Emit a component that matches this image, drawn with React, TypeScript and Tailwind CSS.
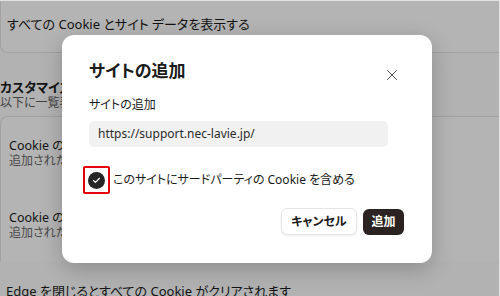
import { X, Check } from "lucide-react";

function SettingsRow({ title, desc }: { title: string; desc: string }) {
  return (
    <div className="h-[72px] flex flex-col justify-center px-[8px]">
      <p className="text-[12.5px] leading-[15px] text-[#1b1b1b]">{title}</p>
      <p className="text-[12px] leading-[15px] text-[#6a6a6a]">{desc}</p>
    </div>
  );
}

export default function App() {
  return (
    <div className="relative w-[500px] h-[296px] overflow-hidden bg-[#fbfbfb] border-t border-r border-[#e2e2e2] font-['Noto_Sans','Noto_Sans_CJK_JP',sans-serif] [font-feature-settings:'palt']">
      {/* settings page behind the dialog */}
      <div className="flex flex-col">
        <div className="h-[52px] rounded-bl-[8px] border-b border-l border-[#e4e4e4] bg-[#fefefe] px-[6px] pt-[14px]">
          <p className="text-[13px] leading-[18px] text-[#1b1b1b]">すべての Cookie とサイト データを表示する</p>
        </div>

        <div className="pt-[26px]">
          <h3 className="text-[13px] leading-[16px] font-bold text-[#1b1b1b]">カスタマイズ</h3>
          <p className="text-[12px] leading-[16px] text-[#5e5e5e]">以下に一覧表</p>
        </div>

        <div className="mt-[5px] rounded-tl-[8px] border-t border-l border-[#e4e4e4] bg-[#fefefe]">
          <SettingsRow title="Cookie の使用" desc="追加されたサ" />
          <SettingsRow title="Cookie の使用" desc="追加されたサ" />
        </div>

        <div className="mt-[22px] px-[6px]">
          <p className="text-[13px] leading-[16px] text-[#1b1b1b]">Edge を閉じるとすべての Cookie がクリアされます</p>
        </div>
      </div>

      {/* overlay */}
      <div className="absolute inset-0 bg-[rgba(0,0,0,0.29)]" />

      {/* dialog */}
      <div className="absolute left-[62px] top-[34px] w-[370px] h-[228px] rounded-[12px] bg-white shadow-[0_6px_22px_rgba(0,0,0,0.22)] pl-[27px] pr-[28px] pt-[24px]">
        <button className="absolute right-[31px] top-[31px] flex items-center justify-center w-[18px] h-[18px] text-[#3a3a3a]" aria-label="閉じる">
          <X className="w-[18px] h-[18px]" strokeWidth={1.2} />
        </button>

        <h2 className="text-[17px] leading-[24px] font-bold text-[#1b1b1b]">サイトの追加</h2>

        <label className="block mt-[14px] text-[12px] leading-[16px] text-[#1b1b1b]">サイトの追加</label>
        <div className="mt-[8px] w-[299px] h-[26px] rounded-[5px] bg-[#f1f1f1] flex items-center px-[9px]">
          <span className="text-[12px] text-[#2b2b2b]">https://support.nec-lavie.jp/</span>
        </div>

        <div className="mt-[19px] flex items-center">
          <span className="-ml-[6px] w-[27px] h-[28px] border-2 border-[#e8000b] rounded-[2px] flex items-center justify-center">
            <span className="w-[17px] h-[17px] rounded-full bg-[#262626] flex items-center justify-center">
              <Check className="w-[9px] h-[9px] text-white" strokeWidth={3} />
            </span>
          </span>
          <span className="ml-[3px] text-[12px] leading-[18px] text-[#1b1b1b]">このサイトにサードパーティの Cookie を含める</span>
        </div>

        <div className="mt-[14px] flex justify-end items-center gap-[6px]">
          <button className="w-[76px] h-[27px] rounded-[6px] bg-white border border-[#e6e6e6] shadow-[0_1px_2px_rgba(0,0,0,0.08)] text-[12px] font-semibold text-[#1b1b1b]">
            キャンセル
          </button>
          <button className="w-[41px] h-[26px] rounded-[6px] bg-[#2a2321] text-[12px] font-semibold text-white">
            追加
          </button>
        </div>
      </div>
    </div>
  );
}
